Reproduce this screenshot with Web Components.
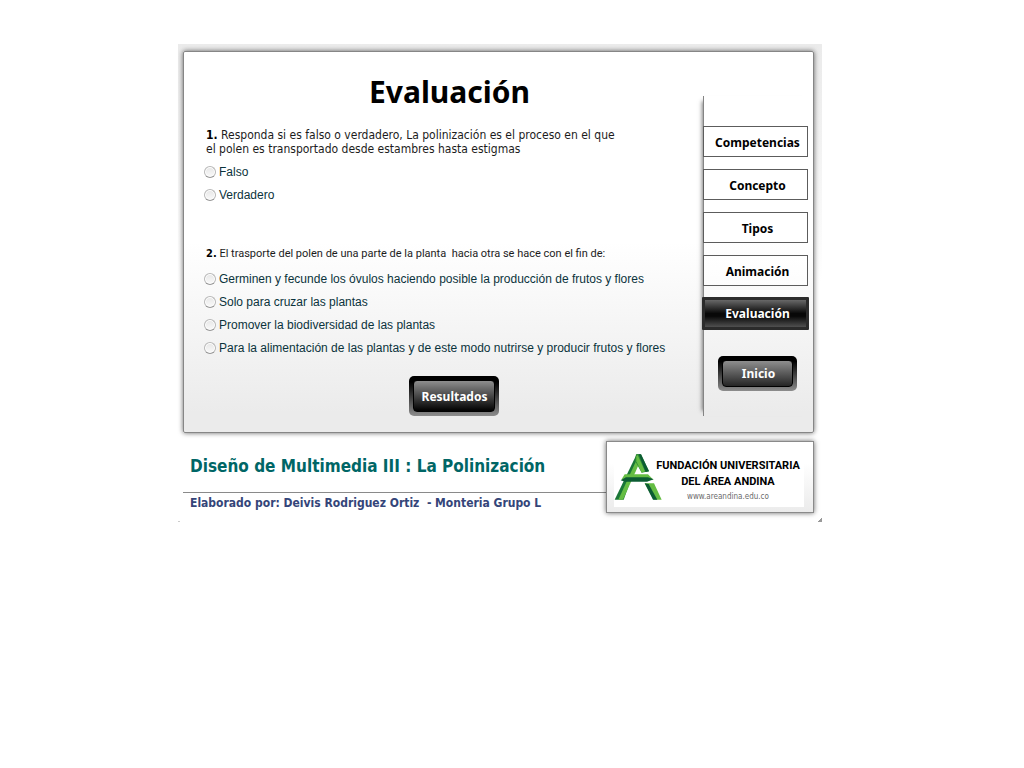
<!DOCTYPE html>
<html lang="es">
<head>
<meta charset="utf-8">
<title>Evaluación - La Polinización</title>
<style>
  body { margin: 0; background: #fff; font-family: "DejaVu Sans Condensed", "Noto Sans", sans-serif; font-size: 12px; color: #000; }
</style>
</head>
<body>
<evaluation-stage></evaluation-stage>

<template id="stage-tpl">
  <style>
    :host { display: flex; justify-content: center; padding: 44px 24px 24px 0; }
    .stage { box-sizing: border-box; width: 100%; max-width: 644px; padding: 7px 8px 0 5px;
      background:
        linear-gradient(135deg, transparent 50%, #999 50%) right bottom / 4px 4px no-repeat,
        linear-gradient(#ccc, #ccc) left bottom / 2px 1px no-repeat,
        linear-gradient(#ebebeb, #ededed 40px, #fff 240px); }
    .card { display: grid; grid-template-columns: 1fr 110px; border: 1px solid #868686; border-radius: 2px;
      background: linear-gradient(#fff 50%, #ebebeb 95%); box-shadow: 0 0 5px rgba(0,0,0,.6); }
    main { padding: 20px 0 16px 20px; display: flex; flex-direction: column; }
    h1 { margin: 0 8px 16px 0; font-family: "Noto Sans", sans-serif; font-size: 30px; line-height: 40px; text-align: center; }
    quiz-question + quiz-question { margin-top: 41px; }
    glossy-button.results { align-self: center; margin-top: 17px; --w: 90px; --h: 40px; --end: #000; }
    footer { display: grid; grid-template-columns: 1fr 208px; margin-top: 8px; }
    .credits { display: flex; flex-direction: column; font-weight: bold; padding-top: 12px; }
    .credits h2 { margin: 0; padding: 0 7px 13px; font-size: 17px; line-height: 26px; color: #006666; border-bottom: 1px solid #8a8a8a; }
    .credits p { margin: 0; padding: 2px 7px 11px; line-height: 16px; color: #344579; white-space: pre; }
  </style>
  <div class="stage">
    <section class="card">
      <main>
        <h1>Evaluación</h1>
        <quiz-question number="1." name="q1" options="Falso|Verdadero">Responda si es falso o verdadero, La polinización es el proceso en el que<br>el polen es transportado desde estambres hasta estigmas</quiz-question>
        <quiz-question class="narrow" number="2." name="q2" options="Germinen y fecunde los óvulos haciendo posible la producción de frutos y flores|Solo para cruzar las plantas|Promover la biodiversidad de las plantas|Para la alimentación de las plantas y de este modo nutrirse y producir frutos y flores">El trasporte del polen de una parte de la planta&nbsp; hacia otra se hace con el fin de:</quiz-question>
        <glossy-button class="results">Resultados</glossy-button>
      </main>
      <side-menu></side-menu>
    </section>
    <footer>
      <div class="credits">
        <h2>Diseño de Multimedia III : La Polinización</h2>
        <p>Elaborado por: Deivis Rodriguez Ortiz  - Monteria Grupo L</p>
      </div>
      <university-logo></university-logo>
    </footer>
  </div>
</template>

<template id="question-tpl">
  <style>
    :host { display: block; }
    fieldset { border: 0; margin: 0; padding: 0; min-width: 0; }
    legend { padding: 0 0 4px 2px; line-height: 14px; color: #1c1c1c; }
    legend b { color: #000; font-family: "DejaVu Sans Condensed", sans-serif; }
    :host(.narrow) legend { padding-bottom: 6px; font-family: Roboto, sans-serif; font-size: 11px; }
    label { display: flex; align-items: center; gap: 3px; height: 23px; font-family: "Liberation Sans", sans-serif; color: #0b333c; }
    input { appearance: none; flex: none; box-sizing: border-box; width: 12px; height: 12px; margin: 0; border: 1px solid #b8b8b8; border-bottom-color: #969696; border-radius: 50%; background: linear-gradient(#e6e6e6, #fafafa); box-shadow: inset 0 0 0 1px #fff; }
    input:checked { background: radial-gradient(#222 30%, #eee 40%); }
  </style>
  <fieldset>
    <legend><b></b> <slot></slot></legend>
    <div class="options"></div>
  </fieldset>
</template>

<template id="glossy-tpl">
  <style>
    :host { display: block; width: var(--w); }
    button { box-sizing: border-box; width: 100%; height: var(--h); padding: 4px; border: 0; border-radius: 5px; cursor: pointer;
      background: linear-gradient(#000 15%, #8d8d8d); font: bold 12px "Noto Sans", sans-serif; color: #fff; display: flex; }
    span { flex: 1; align-self: stretch; display: flex; align-items: center; justify-content: center; padding-left: 2px; border: 1px solid #000; border-radius: 4px; background: linear-gradient(#8e8e8e, var(--end)); }
  </style>
  <button type="button"><span><slot></slot></span></button>
</template>

<template id="menu-tpl">
  <style>
    :host { display: block; margin: 44px 0 16px; }
    nav { box-sizing: border-box; height: 100%; padding-top: 30px; border-left: 1px solid #848484; box-shadow: -6px 0 4px -5px rgba(0,0,0,.5); }
    ul { list-style: none; margin: 0 5px 0 -1px; padding: 0; display: flex; flex-direction: column; gap: 12px; }
    a { box-sizing: border-box; display: block; height: 31px; padding-left: 4px; border: 1px solid #5c5c5c; background: linear-gradient(rgba(255,255,255,.9), rgba(255,255,255,.5)); font-family: "Noto Sans", sans-serif; line-height: 31px; text-align: center; font-weight: bold; color: #000; text-decoration: none; }
    a[aria-current] { height: 33px; margin: -1px; border: 3px solid #2b2b2b; border-radius: 1px; line-height: 28px; color: #fff; background: linear-gradient(#686868, #080808 50%, #080808 60%, #505050); }
    glossy-button { margin: 27px 0 0 14px; --w: 79px; --h: 35px; --end: #252525; }
  </style>
  <nav aria-label="Secciones">
    <ul>
      <li><a href="#competencias">Competencias</a></li>
      <li><a href="#concepto">Concepto</a></li>
      <li><a href="#tipos">Tipos</a></li>
      <li><a href="#animacion">Animación</a></li>
      <li><a href="#evaluacion" aria-current="page">Evaluación</a></li>
    </ul>
    <glossy-button>Inicio</glossy-button>
  </nav>
</template>

<template id="logo-tpl">
  <style>
    :host { display: block; }
    .box { box-sizing: border-box; height: 72px; padding: 7px 9px 5px 7px; border: 1px solid #8a8a8a; background: linear-gradient(#fff 30%, #ebebeb); box-shadow: 0 0 5px rgba(0,0,0,.6); }
    .mark { display: flex; height: 100%; background: #fff; }
    svg { flex: none; width: 48px; height: 50px; margin-top: 4px; }
    .name { flex: 1; padding: 9px 10px 0 0; text-align: center; white-space: nowrap; font: bold 11px/16px Roboto, sans-serif; }
    .name div { margin: 0 -8px; }
    .name .url { font: 8px/13px "DejaVu Sans Condensed", sans-serif; color: #6b6b6b; }
  </style>
  <div class="box"><div class="mark">
    <svg viewBox="14 24 144 150" aria-hidden="true">
      <path fill="#1a7637" d="M82 28h10L43 164H16z"/>
      <path fill="#65bd43" d="M84 40l9 8-52 116H27z"/>
      <path fill="#2c8b35" d="M80 28h15l24 51-22 4-20-36z"/>
      <path fill="#65bd43" d="M81 34l4-4 22 49-10 4-16-34z"/>
      <path fill="#0c5c33" d="M88 28h7l24 51-10 2z"/>
      <path fill="#65bd43" d="M46 88h70l16 16H36z"/>
      <path fill="#0c5c33" d="M34 106l16-9h66l17 6-20 7H47z"/>
      <path fill="#65bd43" d="M106 115h28l23 49h-24z"/>
      <path fill="#0c5c33" d="M106 115l12 2 26 47h-13z"/>
    </svg>
    <div class="name"><div>FUNDACIÓN UNIVERSITARIA</div><div>DEL ÁREA ANDINA</div><div class="url">www.areandina.edu.co</div></div>
  </div></div>
</template>

<script>
  class TemplateElement extends HTMLElement {
    constructor() {
      super();
      this.attachShadow({ mode: 'open' })
        .append(document.getElementById(this.constructor.template).content.cloneNode(true));
    }
  }
  customElements.define('glossy-button', class extends TemplateElement { static template = 'glossy-tpl'; });
  customElements.define('side-menu', class extends TemplateElement { static template = 'menu-tpl'; });
  customElements.define('university-logo', class extends TemplateElement { static template = 'logo-tpl'; });
  customElements.define('quiz-question', class extends TemplateElement {
    static template = 'question-tpl';
    connectedCallback() {
      this.shadowRoot.querySelector('b').textContent = this.getAttribute('number');
      const box = this.shadowRoot.querySelector('.options');
      if (box.childElementCount) return;
      this.getAttribute('options').split('|').forEach((text, i) => {
        const input = document.createElement('input');
        input.type = 'radio';
        input.name = this.getAttribute('name');
        input.id = input.name + '-' + i;
        const label = document.createElement('label');
        label.htmlFor = input.id;
        const span = document.createElement('span');
        span.textContent = text;
        label.append(input, span);
        box.append(label);
      });
    }
  });
  customElements.define('evaluation-stage', class extends TemplateElement { static template = 'stage-tpl'; });
</script>
</body>
</html>
